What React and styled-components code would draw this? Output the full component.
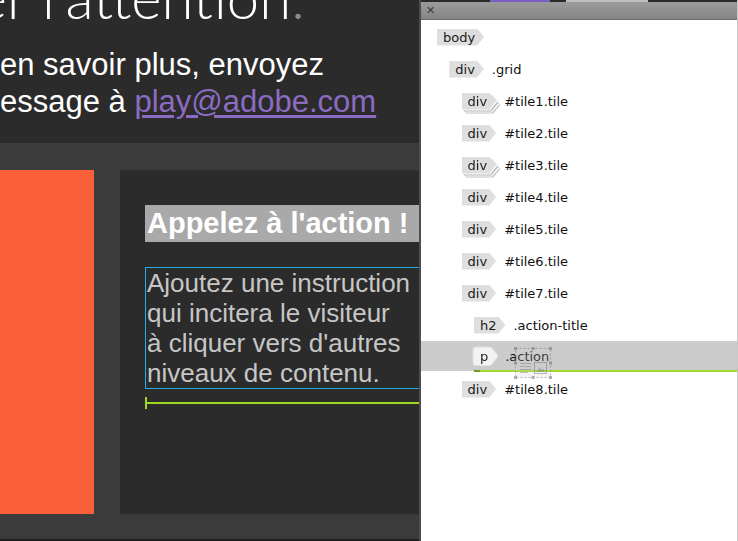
import React from "react";
import styled, { createGlobalStyle, css } from "styled-components";

const GlobalStyle = createGlobalStyle`
  html, body {
    margin: 0;
    padding: 0;
    background: #2b2b2b;
    overflow: hidden;
  }
`;

const Stage = styled.div`
  position: relative;
  width: 738px;
  height: 541px;
  overflow: hidden;
  background: #2b2b2b;
`;

const Header = styled.header`
  height: 143px;
  overflow: hidden;
`;

const Title = styled.h1`
  margin: -32px 0 0 -130px;
  font-family: Lato, "Open Sans", sans-serif;
  font-weight: 300;
  font-size: 58px;
  line-height: 58px;
  color: #fff;
  white-space: nowrap;

  span {
    color: #8c8c8c;
  }
`;

const Lead = styled.p`
  margin: 20px 0 0 0;
  font-family: "Liberation Sans", Arial, sans-serif;
  font-size: 31px;
  line-height: 37px;
  color: #fff;
  white-space: nowrap;

  a {
    color: #8b6cc2;
    text-decoration: underline;
    text-underline-offset: 3px;
  }
`;

const Band = styled.section`
  height: 369px;
  padding-top: 27px;
  background: #3b3b3b;
  border-bottom: 2px solid #1f1f1f;
`;

const Grid = styled.div`
  display: grid;
  grid-template-columns: 94px 480px;
  column-gap: 26px;
  height: 344px;
`;

const ColorTile = styled.div`
  background: ${p => p.color};
`;

const TextTile = styled.div`
  background: #2b2b2b;
  padding: 35px 0 0 25px;
`;

const ActionTitle = styled.h2`
  margin: 0;
  padding-left: 2px;
  height: 37px;
  background: #a9a9a9;
  font-family: "Liberation Sans", Arial, sans-serif;
  font-weight: bold;
  font-size: 29px;
  line-height: 37px;
  color: #fff;
  white-space: nowrap;
`;

const ActionText = styled.p`
  margin: 25px 0 0 0;
  width: 300px;
  padding-left: 1px;
  border: 1px solid #22aee6;
  font-family: "Liberation Sans", Arial, sans-serif;
  font-size: 26px;
  line-height: 30px;
  color: #c6c6c6;
  white-space: nowrap;
`;

const InsertMarker = styled.div`
  position: relative;
  margin-top: 8px;
  height: 12px;
  border-left: 2px solid #9fd523;

  &::after {
    content: "";
    position: absolute;
    left: 0;
    right: 0;
    top: 5px;
    height: 2px;
    background: #9fd523;
  }
`;

/* DOM panel */

const Panel = styled.aside`
  position: absolute;
  top: 0;
  left: 419px;
  width: 319px;
  height: 541px;
  box-sizing: border-box;
  background: #fff;
  border-left: 2px solid #4d4d4d;
  border-right: 1px solid #c9c9c9;
`;

const TopStrip = styled.div`
  height: 2px;
  background: linear-gradient(
    to right,
    #2a2a2a 69px,
    #7b5fc0 69px,
    #7b5fc0 129px,
    #2a2a2a 129px,
    #2a2a2a 145px,
    #bdbdbd 145px,
    #bdbdbd 227px,
    #2a2a2a 227px
  );
`;

const TitleBar = styled.div`
  display: flex;
  align-items: center;
  height: 17px;
  padding-left: 5px;
  background: linear-gradient(#9b9b9b, #858585);
  border-bottom: 1px solid #6a6a6a;
`;

const Close = styled.span`
  font-family: "DejaVu Sans", sans-serif;
  font-size: 11px;
  font-weight: bold;
  color: #3a3a3a;
  line-height: 1;
`;

const Tree = styled.ul`
  list-style: none;
  margin: 0;
  padding: 1px 0 0 0;
`;

const Row = styled.li`
  position: relative;
  display: flex;
  align-items: center;
  gap: 8px;
  height: 32px;
  padding-left: ${p => 16 + p.depth * 12.3}px;
  ${p =>
    p.selected &&
    css`
      background: #cbcbcb;
      height: 30px;
      margin-bottom: 2px;

      &::after {
        content: "";
        position: absolute;
        left: ${16 + p.depth * 12.3}px;
        right: 0;
        bottom: -1px;
        height: 2px;
        background: linear-gradient(to right, #6f9a1c 6px, #a3d92b 6px);
      }
    `}
`;

const ChipWrap = styled.span`
  display: inline-flex;
  ${p =>
    p.stacked &&
    css`
      filter: drop-shadow(1px 1px 0 #fff) drop-shadow(1px 1px 0 #b3b3b3)
        drop-shadow(1px 1px 0 #fff) drop-shadow(1px 1px 0 #c4c4c4);
    `}
  ${p =>
    p.selected &&
    css`
      filter: drop-shadow(0 0 1px #fff) drop-shadow(0 0 0.5px #fff);
    `}
`;

const Chip = styled.span`
  display: inline-flex;
  align-items: center;
  height: 17px;
  padding: 0 9px 0 6px;
  background: ${p => (p.selected ? "#f3f3f3" : "#dedede")};
  clip-path: polygon(0 0, calc(100% - 7px) 0, 100% 50%, calc(100% - 7px) 100%, 0 100%);
  font-family: "DejaVu Sans", "Noto Sans", sans-serif;
  font-size: 13px;
  color: #1a1a1a;
`;

const Label = styled.span`
  font-family: "DejaVu Sans", "Noto Sans", sans-serif;
  font-size: 13px;
  color: #111;
  white-space: nowrap;
`;

const DragGhost = styled.svg`
  position: absolute;
  left: 93px;
  top: 347px;
  opacity: 0.55;
`;

const nodes = [
  { tag: "body", label: "", depth: 0 },
  { tag: "div", label: ".grid", depth: 1 },
  { tag: "div", label: "#tile1.tile", depth: 2, stacked: true },
  { tag: "div", label: "#tile2.tile", depth: 2 },
  { tag: "div", label: "#tile3.tile", depth: 2, stacked: true },
  { tag: "div", label: "#tile4.tile", depth: 2 },
  { tag: "div", label: "#tile5.tile", depth: 2 },
  { tag: "div", label: "#tile6.tile", depth: 2 },
  { tag: "div", label: "#tile7.tile", depth: 2 },
  { tag: "h2", label: ".action-title", depth: 3 },
  { tag: "p", label: ".action", depth: 3, selected: true },
  { tag: "div", label: "#tile8.tile", depth: 2 }
];

const Ghost = () => (
  <DragGhost width="38" height="32" viewBox="0 0 38 32">
    <rect x="1.5" y="1.5" width="35" height="29" fill="#d0d0d0" fillOpacity="0.4"
      stroke="#7a7a7a" strokeDasharray="2 2" />
    {[[1.5, 1.5], [19, 1.5], [36.5, 1.5], [1.5, 16], [36.5, 16], [1.5, 30.5], [19, 30.5], [36.5, 30.5]].map(
      ([x, y], i) => (
        <rect key={i} x={x - 1.5} y={y - 1.5} width="3" height="3" fill="#6d6d6d" />
      )
    )}
    <g stroke="#8a8a8a" strokeWidth="1">
      <line x1="6" y1="16.5" x2="17" y2="16.5" />
      <line x1="6" y1="19.5" x2="17" y2="19.5" />
      <line x1="6" y1="22.5" x2="17" y2="22.5" />
      <line x1="6" y1="25.5" x2="14" y2="25.5" />
    </g>
    <rect x="20.5" y="15.5" width="12" height="11" fill="none" stroke="#7a7a7a" />
    <path d="M22 25 L25.5 20.5 L28 23 L29.5 21.5 L31.5 25 Z" fill="#8a8a8a" />
  </DragGhost>
);

const App = () => {
  return (
    <Stage>
      <GlobalStyle />
      <Header>
        <Title>
          Attirer l'attention<span>.</span>
        </Title>
        <Lead>
          en savoir plus, envoyez
          <br />
          essage à <a href="mailto:play@adobe.com">play@adobe.com</a>
        </Lead>
      </Header>
      <Band>
        <Grid>
          <ColorTile color="#f9603a" />
          <TextTile>
            <ActionTitle>Appelez à l'action !</ActionTitle>
            <ActionText>
              Ajoutez une instruction
              <br />
              qui incitera le visiteur
              <br />
              à cliquer vers d'autres
              <br />
              niveaux de contenu.
            </ActionText>
            <InsertMarker />
          </TextTile>
        </Grid>
      </Band>

      <Panel>
        <TopStrip />
        <TitleBar>
          <Close>✕</Close>
        </TitleBar>
        <Tree>
          {nodes.map((n, i) => (
            <Row key={i} depth={n.depth} selected={n.selected}>
              <ChipWrap stacked={n.stacked} selected={n.selected}>
                <Chip selected={n.selected}>{n.tag}</Chip>
              </ChipWrap>
              {n.label && <Label>{n.label}</Label>}
            </Row>
          ))}
        </Tree>
        <Ghost />
      </Panel>
    </Stage>
  );
};

export default App;
